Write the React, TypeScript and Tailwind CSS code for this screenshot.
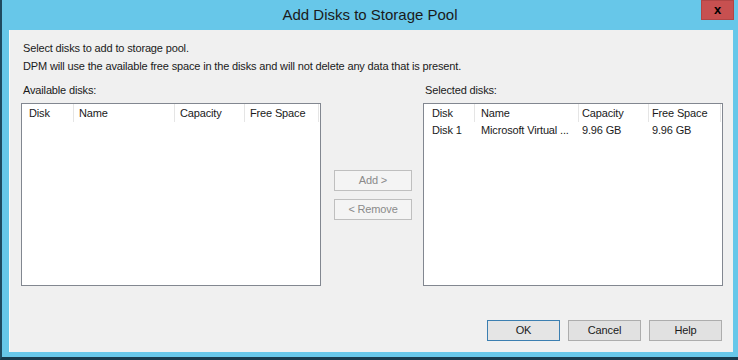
export default function App() {
  const leftCols = [
    { w: "w-[52px]", pl: "pl-[7px]", label: "Disk" },
    { w: "w-[101px]", pl: "pl-[5px]", label: "Name" },
    { w: "w-[70px]", pl: "pl-[5px]", label: "Capacity" },
    { w: "w-[74px]", pl: "pl-[5px]", label: "Free Space" },
  ];
  const rightCols = [
    { w: "w-[51px]", pl: "pl-[8px]", label: "Disk" },
    { w: "w-[104px]", pl: "pl-[6px]", label: "Name" },
    { w: "w-[70px]", pl: "pl-[3px]", label: "Capacity" },
    { w: "w-[72px]", pl: "pl-[3px]", label: "Free Space" },
  ];
  const row = ["Disk 1", "Microsoft Virtual ...", "9.96 GB", "9.96 GB"];

  return (
    <div className="w-[738px] h-[360px] bg-[#67c7e9] border-l-[2px] border-l-[#1f4a60] border-b-[3px] border-b-[#173a4d] flex flex-col overflow-hidden font-['Liberation_Sans',Arial,sans-serif]">
      <div className="relative h-[30px] shrink-0 flex items-center justify-center text-[15px] text-[#1a1a1a]">
        <span className="mt-[1px]">Add Disks to Storage Pool</span>
        <div className="absolute right-[4px] top-0 w-[33px] h-[20px] bg-[#c75050] border border-[#b04545] flex items-center justify-center text-[13px] font-bold text-black leading-none">
          <span className="-mt-[1px]">x</span>
        </div>
      </div>
      <div className="ml-[7px] mr-[5px] h-[322px] shrink-0 bg-[#f0f0f0] border-l border-l-[#fbfbfb] flex flex-col text-[11px] tracking-[-0.15px] text-[#1a1a1a]">
        <div className="pl-[13px] pt-[9px] leading-[18px]">
          <div>Select disks to add to storage pool.</div>
          <div>DPM will use the available free space in the disks and will not delete any data that is present.</div>
        </div>
        <div className="flex mt-[6px] pl-[11px]">
          <div className="w-[300px] flex flex-col">
            <div className="h-[18px] leading-[18px] pl-[2px]">Available disks:</div>
            <div className="mt-[4px] h-[183px] border border-[#828790] bg-white">
              <div className="flex h-[18px] leading-[18px]">
                {leftCols.map((c) => (
                  <div key={c.label} className={`${c.w} ${c.pl} border-r border-r-[#e5e5e5] whitespace-nowrap`}>
                    {c.label}
                  </div>
                ))}
              </div>
            </div>
          </div>
          <div className="ml-[13px] w-[78px] flex flex-col gap-[8px] pt-[89px]">
            <div className="h-[21px] border border-[#bfbfbf] bg-[#f4f4f4] text-[#8a8a8a] flex items-center justify-center">Add &gt;</div>
            <div className="h-[21px] border border-[#bfbfbf] bg-[#f4f4f4] text-[#8a8a8a] flex items-center justify-center">&lt; Remove</div>
          </div>
          <div className="ml-[11px] w-[300px] flex flex-col">
            <div className="h-[18px] leading-[18px] pl-[2px]">Selected disks:</div>
            <div className="mt-[4px] h-[183px] border border-[#828790] bg-white">
              <div className="flex h-[18px] leading-[18px]">
                {rightCols.map((c) => (
                  <div key={c.label} className={`${c.w} ${c.pl} border-r border-r-[#e5e5e5] whitespace-nowrap`}>
                    {c.label}
                  </div>
                ))}
              </div>
              <div className="flex h-[17px] leading-[17px]">
                {rightCols.map((c, i) => (
                  <div key={c.label} className={`${c.w} ${c.pl} whitespace-nowrap overflow-hidden`}>
                    {row[i]}
                  </div>
                ))}
              </div>
            </div>
          </div>
        </div>
        <div className="flex justify-end gap-[8px] pr-[11px] mt-[34px]">
          <div className="w-[73px] h-[21px] border border-[#3c7fb1] bg-[#e5e5e5] flex items-center justify-center">OK</div>
          <div className="w-[73px] h-[21px] border border-[#adadad] bg-[#e1e1e1] flex items-center justify-center">Cancel</div>
          <div className="w-[73px] h-[21px] border border-[#adadad] bg-[#e1e1e1] flex items-center justify-center">Help</div>
        </div>
      </div>
    </div>
  );
}
